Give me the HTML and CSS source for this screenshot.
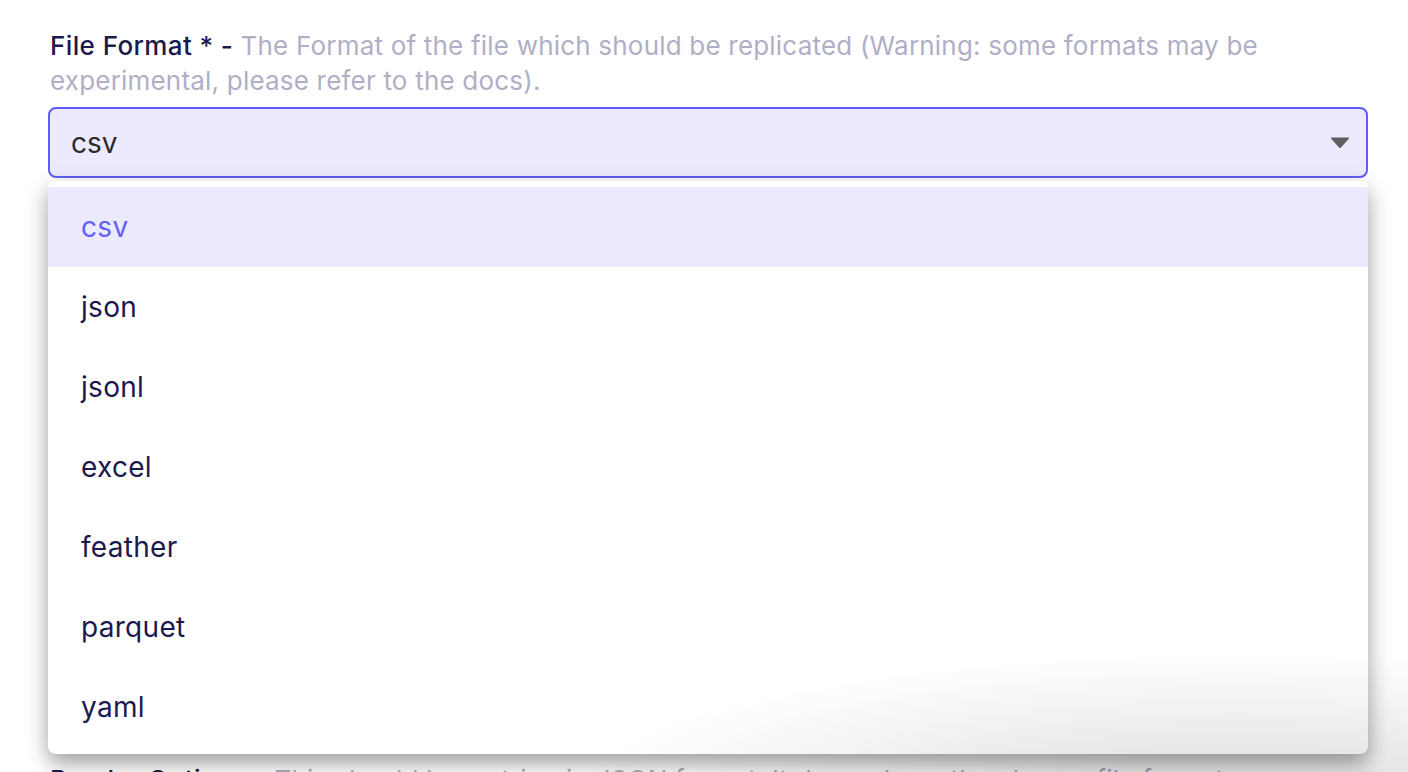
FILE: index.html
```html
<!DOCTYPE html>
<html>
<head>
<meta charset="utf-8">
<link rel="stylesheet" href="styles.css">
</head>
<body>
<div class="page">
  <div class="field">
    <label class="label"><span class="name">File Format * - </span><span class="desc">The Format of the file which should be replicated (Warning: some formats may be experimental, please refer to the docs).</span></label>
    <div class="select-wrap">
      <div class="select">
        <span class="value">csv</span>
        <svg class="caret" width="20" height="12" viewBox="0 0 20 12"><path d="M1 1.5 Q0.5 0.5 2 0.5 H18 Q19.5 0.5 19 1.5 L11 10.5 Q10 11.5 9 10.5 Z" fill="#5f5f5f"/></svg>
      </div>
      <ul class="menu">
        <li class="opt selected">csv</li>
        <li class="opt">json</li>
        <li class="opt">jsonl</li>
        <li class="opt">excel</li>
        <li class="opt">feather</li>
        <li class="opt">parquet</li>
        <li class="opt">yaml</li>
      </ul>
    </div>
  </div>
  <div class="field next">
    <label class="label"><span class="name">Reader Options - </span><span class="desc">This should be a string in JSON format. It depends on the chosen file format.</span></label>
  </div>
</div>
<div class="shade"></div>
</body>
</html>
```
FILE: styles.css
```css
html, body {
  margin: 0;
  padding: 0;
  background: #ffffff;
  overflow: hidden;
}
body {
  font-family: Inter, "Noto Sans", sans-serif;
  width: 1408px;
  height: 772px;
  position: relative;
}
.page {
  padding: 28px 40px 0 48px;
  height: 772px;
  box-sizing: border-box;
  overflow: hidden;
}
.field {
  display: flex;
  flex-direction: column;
}
.label {
  display: block;
  font-size: 26px;
  line-height: 35px;
  padding: 0 0 0 2px;
  letter-spacing: 0.2px;
}
.name {
  color: #1b1a4e;
  font-weight: 500;
  letter-spacing: 0.4px;
}
.desc {
  color: #b0afc5;
}
.select-wrap {
  position: relative;
  margin-top: 9px;
}
.select {
  height: 71px;
  box-sizing: border-box;
  border: 2px solid #615cf6;
  border-radius: 8px;
  background: #ebeafe;
  display: flex;
  align-items: center;
  justify-content: space-between;
  padding: 0 16px 0 21px;
}
.value {
  font-size: 28px;
  color: #2b2b2b;
}
.caret {
  display: block;
}
.menu {
  position: absolute;
  left: 0;
  right: 0;
  top: 74px;
  margin: 0;
  padding: 6px 0 7px;
  list-style: none;
  background: #ffffff;
  border-radius: 8px;
  box-shadow: 0 10px 20px rgba(0, 0, 0, 0.32), 0 2px 30px rgba(0, 0, 0, 0.08);
  z-index: 2;
}
.opt {
  height: 80px;
  display: flex;
  align-items: center;
  padding-left: 33px;
  font-size: 28px;
  letter-spacing: 0.3px;
  color: #1b1a4e;
}
.opt.selected {
  background: #ebeafe;
  color: #645ff8;
}
.next {
  margin-top: 584px;
}
.shade {
  position: absolute;
  left: 560px;
  top: 650px;
  width: 900px;
  height: 150px;
  background: radial-gradient(ellipse at 75% 100%, rgba(0,0,0,0.14), rgba(0,0,0,0) 70%);
  z-index: 3;
  pointer-events: none;
}
```
